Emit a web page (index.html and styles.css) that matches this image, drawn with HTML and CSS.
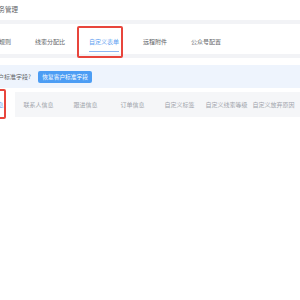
FILE: index.html
```html
<!DOCTYPE html>
<html lang="zh">
<head>
<meta charset="utf-8">
<link rel="stylesheet" href="styles.css">
</head>
<body>
<div class="page">
  <div class="title">业务管理</div>
  <div class="band"></div>
  <div class="tabs">
    <div class="tab">分配规则</div>
    <div class="tab">线索分配比</div>
    <div class="tab active">自定义表单<span class="hl"></span></div>
    <div class="tab">远程附件</div>
    <div class="tab">公众号配置</div>
  </div>
  <div class="band"></div>
  <div class="content">
    <div class="notice">
      <span class="q">是否恢复客户标准字段?</span>
      <span class="btn">恢复客户标准字段</span>
    </div>
    <div class="cols">
      <div class="col sel">基本信息<span class="hl2"></span></div>
      <div class="col">联系人信息</div>
      <div class="col">跟进信息</div>
      <div class="col">订单信息</div>
      <div class="col">自定义标签</div>
      <div class="col">自定义线索等级</div>
      <div class="col">自定义放弃原因</div>
    </div>
  </div>
</div>
</body>
</html>
```

FILE: styles.css
```css
html, body {
  margin: 0;
  padding: 0;
  background: #ffffff;
}
body {
  font-family: "Noto Sans CJK SC", "Noto Sans", sans-serif;
  width: 300px;
  height: 300px;
  overflow: hidden;
}
.page {
  display: flex;
  flex-direction: column;
}
.title {
  height: 20px;
  line-height: 19px;
  font-size: 6.5px;
  color: #606266;
  margin-left: -8px;
}
.band {
  height: 4px;
  background: #f2f3f6;
}
.tabs {
  height: 30px;
  display: flex;
  margin-left: -25px;
  background: #fff;
}
.tab {
  position: relative;
  flex: none;
  padding: 15px 12px 0;
  font-size: 6px;
  line-height: 6px;
  color: #606266;
  white-space: nowrap;
}
.tab.active {
  color: #5b9cf0;
}
.tab.active .hl {
  position: absolute;
  left: 12px;
  right: 12px;
  top: 27px;
  height: 1px;
  background: #8cb8f4;
}
.tab.active::after {
  content: "";
  position: absolute;
  left: 0;
  right: 8px;
  top: 2px;
  bottom: -4px;
  border: 2px solid #e8453c;
  border-radius: 2px;
}
.content {
  padding-top: 7px;
}
.notice {
  height: 23px;
  background: #eef4fd;
  display: flex;
  align-items: center;
  gap: 7px;
  margin-left: -32px;
}
.q {
  font-size: 6px;
  color: #606266;
  white-space: nowrap;
}
.btn {
  background: #4c9df4;
  color: #fff;
  font-size: 5.7px;
  height: 12px;
  line-height: 12px;
  padding: 0 4.5px;
  border-radius: 2px;
  margin-top: 1px;
  white-space: nowrap;
}
.cols {
  margin-top: 4px;
  margin-left: -32px;
  display: flex;
  height: 25px;
  background: #f5f6f8;
  width: 340px;
}
.col {
  position: relative;
  width: 47px;
  flex: none;
  text-align: center;
  font-size: 6px;
  line-height: 25px;
  color: #a0a4ab;
  white-space: nowrap;
}
.col.sel {
  background: #fff;
  color: #5b9cf0;
}
.col.sel .hl2 {
  position: absolute;
  left: 0;
  right: 9px;
  top: -3px;
  bottom: -2px;
  border: 2px solid #e8453c;
  border-radius: 2px;
}
```
